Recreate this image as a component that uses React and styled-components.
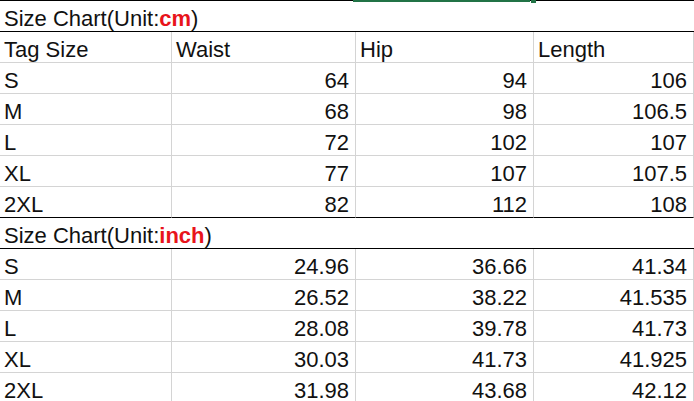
import React from "react";
import styled, { createGlobalStyle } from "styled-components";

const Global = createGlobalStyle`
  html, body { margin: 0; padding: 0; background: #fff; overflow: hidden; }
  body { font-family: "Liberation Sans", Arial, sans-serif; }
`;

const Sheet = styled.div`
  position: relative;
  width: 694px;
  height: 400px;
  border-top: 1px solid #000;
  color: #111;
  font-size: 22px;
`;

const Selection = styled.div`
  position: absolute;
  top: -1px;
  left: 353px;
  width: 177px;
  height: 2px;
  background: #217346;
  &::after {
    content: "";
    position: absolute;
    right: -6px;
    top: 0;
    width: 5px;
    height: 3px;
    background: #217346;
  }
`;

const Grid = styled.div`
  display: grid;
  grid-template-columns: 172px 184px 178px 160px;
`;

const Title = styled.div`
  grid-column: 1 / -1;
  height: 30px;
  line-height: 35px;
  padding-left: 4px;
  overflow: hidden;
  white-space: nowrap;
  border-bottom: 1px solid #000;
`;

const Unit = styled.span`
  color: #e8141b;
  font-weight: bold;
`;

const Cell = styled.div`
  height: 30px;
  line-height: 35px;
  overflow: hidden;
  white-space: nowrap;
  border-right: 1px solid #d4d4d4;
  border-bottom: 1px solid ${(p) => (p.$dark ? "#000" : "#d4d4d4")};
  text-align: ${(p) => (p.$num ? "right" : "left")};
  padding: ${(p) => (p.$num ? "0 6px 0 0" : "0 0 0 4px")};
`;

const cm = [
  ["S", "64", "94", "106"],
  ["M", "68", "98", "106.5"],
  ["L", "72", "102", "107"],
  ["XL", "77", "107", "107.5"],
  ["2XL", "82", "112", "108"],
];

const inch = [
  ["S", "24.96", "36.66", "41.34"],
  ["M", "26.52", "38.22", "41.535"],
  ["L", "28.08", "39.78", "41.73"],
  ["XL", "30.03", "41.73", "41.925"],
  ["2XL", "31.98", "43.68", "42.12"],
];

function Rows({ data, lastDark }) {
  return data.map((row, i) => {
    const dark = lastDark && i === data.length - 1;
    return row.map((v, j) => (
      <Cell key={`${i}-${j}`} $num={j > 0} $dark={dark}>
        {v}
      </Cell>
    ));
  });
}

export default function App() {
  return (
    <>
      <Global />
      <Sheet>
        <Selection />
        <Grid>
          <Title>
            Size Chart(Unit:<Unit>cm</Unit>)
          </Title>
          <Cell>Tag Size</Cell>
          <Cell>Waist</Cell>
          <Cell>Hip</Cell>
          <Cell>Length</Cell>
          <Rows data={cm} lastDark />
          <Title>
            Size Chart(Unit:<Unit>inch</Unit>)
          </Title>
          <Rows data={inch} />
        </Grid>
      </Sheet>
    </>
  );
}
